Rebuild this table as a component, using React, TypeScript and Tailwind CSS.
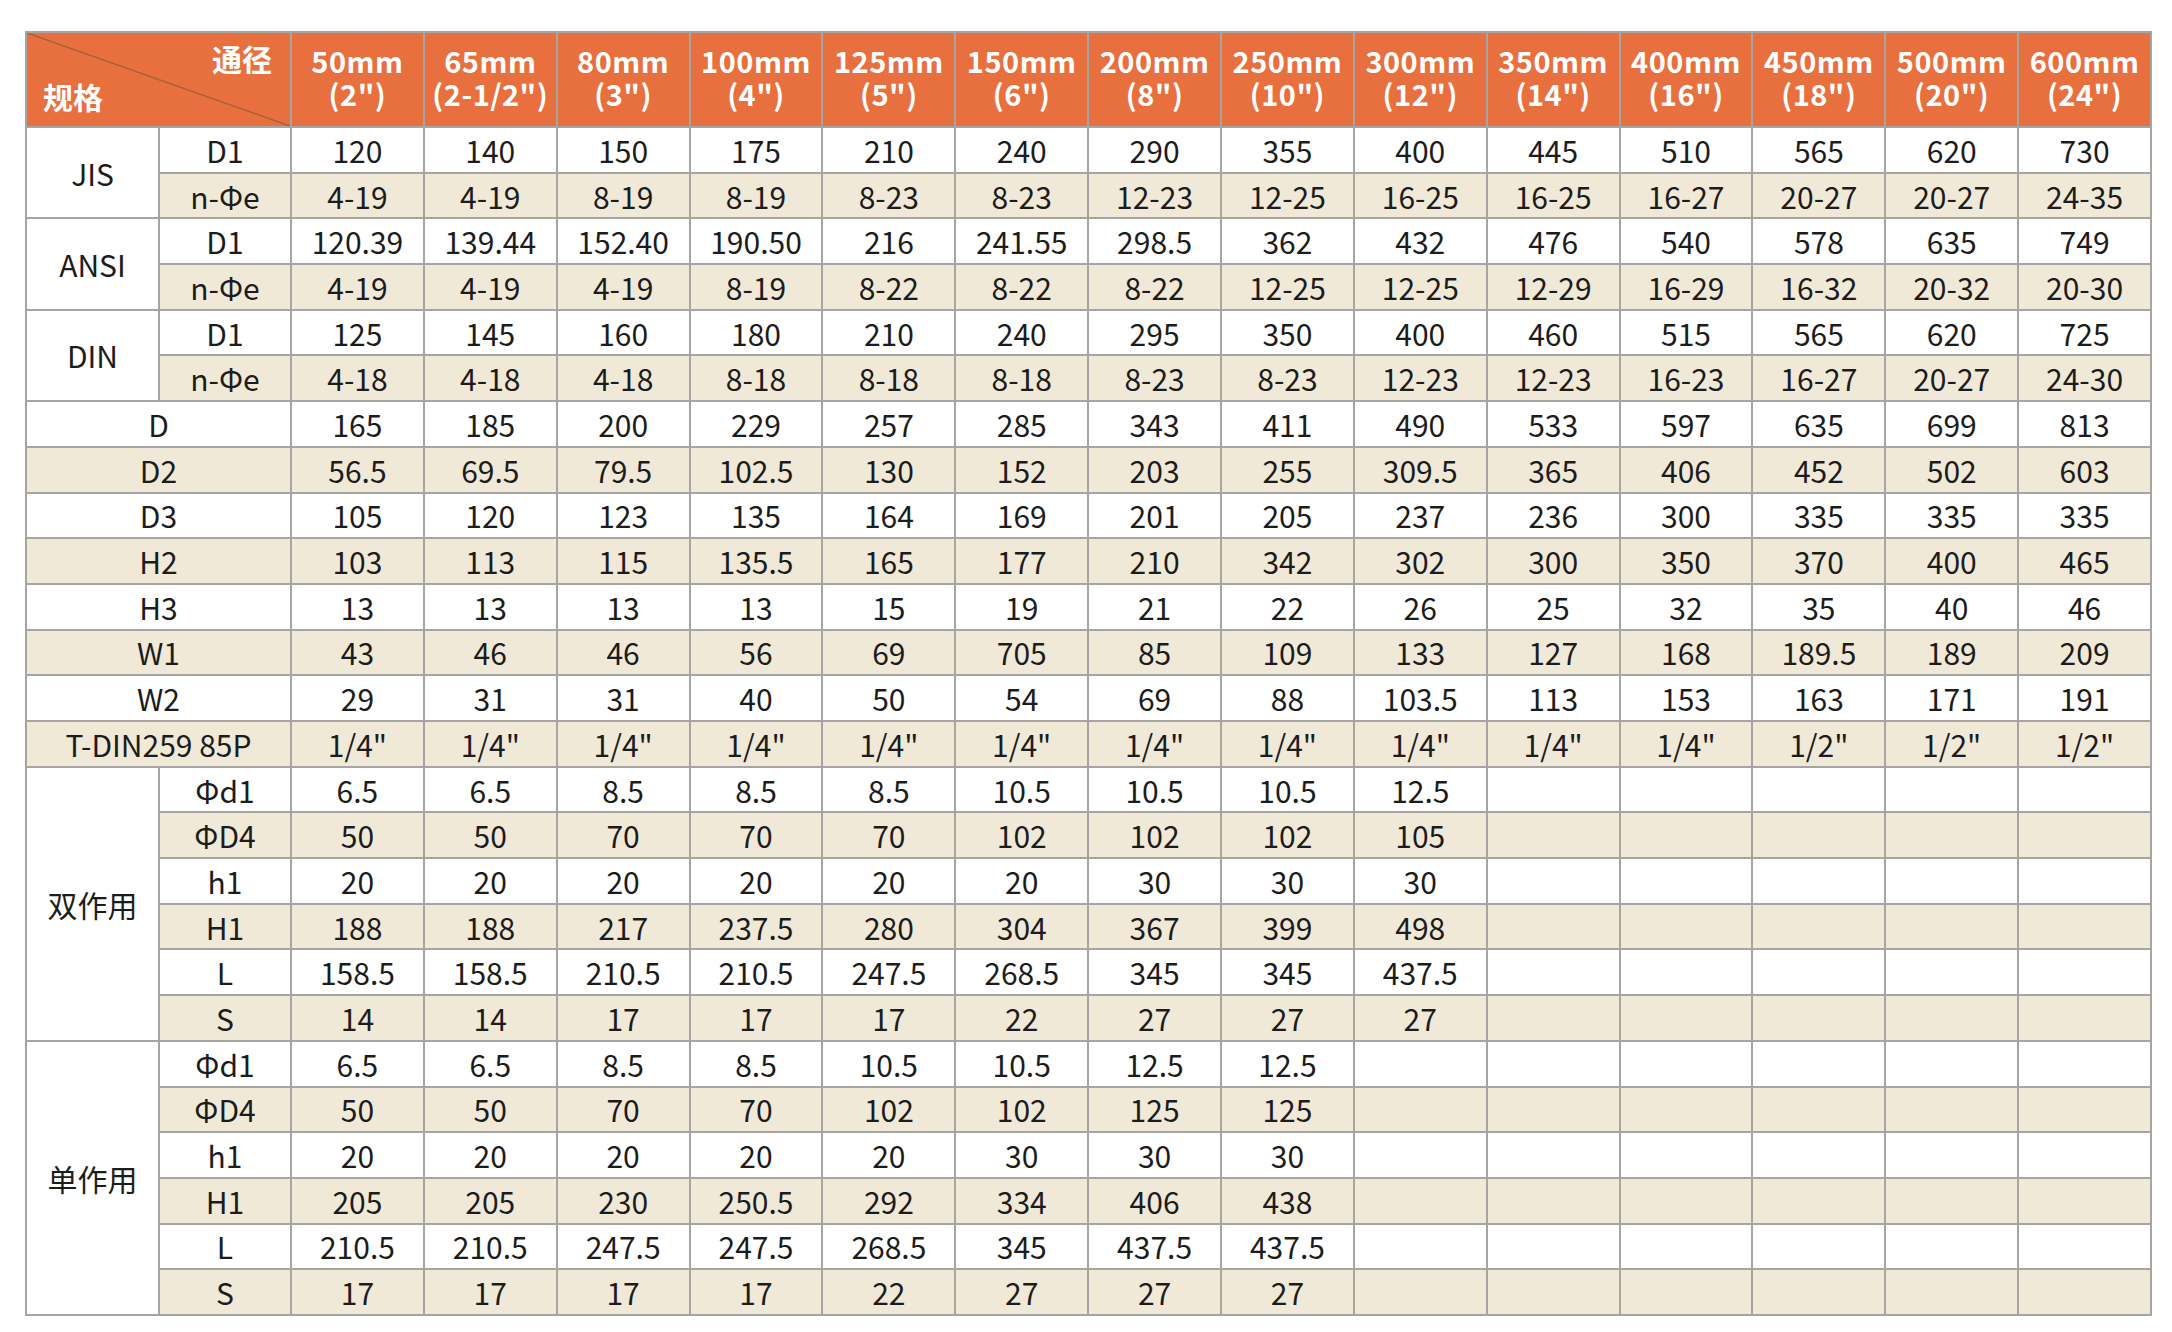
import React from 'react'

const sizes = [
  ['50mm', '(2")'],
  ['65mm', '(2-1/2")'],
  ['80mm', '(3")'],
  ['100mm', '(4")'],
  ['125mm', '(5")'],
  ['150mm', '(6")'],
  ['200mm', '(8")'],
  ['250mm', '(10")'],
  ['300mm', '(12")'],
  ['350mm', '(14")'],
  ['400mm', '(16")'],
  ['450mm', '(18")'],
  ['500mm', '(20")'],
  ['600mm', '(24")'],
]

type Group = { name?: string; rows: { label: string; values: string[] }[] }

const v = (s: string) => s.split(' ')

const groups: Group[] = [
  {
    name: 'JIS',
    rows: [
      { label: 'D1', values: v('120 140 150 175 210 240 290 355 400 445 510 565 620 730') },
      { label: 'n-Φe', values: v('4-19 4-19 8-19 8-19 8-23 8-23 12-23 12-25 16-25 16-25 16-27 20-27 20-27 24-35') },
    ],
  },
  {
    name: 'ANSI',
    rows: [
      { label: 'D1', values: v('120.39 139.44 152.40 190.50 216 241.55 298.5 362 432 476 540 578 635 749') },
      { label: 'n-Φe', values: v('4-19 4-19 4-19 8-19 8-22 8-22 8-22 12-25 12-25 12-29 16-29 16-32 20-32 20-30') },
    ],
  },
  {
    name: 'DIN',
    rows: [
      { label: 'D1', values: v('125 145 160 180 210 240 295 350 400 460 515 565 620 725') },
      { label: 'n-Φe', values: v('4-18 4-18 4-18 8-18 8-18 8-18 8-23 8-23 12-23 12-23 16-23 16-27 20-27 24-30') },
    ],
  },
  {
    rows: [
      { label: 'D', values: v('165 185 200 229 257 285 343 411 490 533 597 635 699 813') },
      { label: 'D2', values: v('56.5 69.5 79.5 102.5 130 152 203 255 309.5 365 406 452 502 603') },
      { label: 'D3', values: v('105 120 123 135 164 169 201 205 237 236 300 335 335 335') },
      { label: 'H2', values: v('103 113 115 135.5 165 177 210 342 302 300 350 370 400 465') },
      { label: 'H3', values: v('13 13 13 13 15 19 21 22 26 25 32 35 40 46') },
      { label: 'W1', values: v('43 46 46 56 69 705 85 109 133 127 168 189.5 189 209') },
      { label: 'W2', values: v('29 31 31 40 50 54 69 88 103.5 113 153 163 171 191') },
      { label: 'T-DIN259 85P', values: v('1/4" 1/4" 1/4" 1/4" 1/4" 1/4" 1/4" 1/4" 1/4" 1/4" 1/4" 1/2" 1/2" 1/2"') },
    ],
  },
  {
    name: '双作用',
    rows: [
      { label: 'Φd1', values: v('6.5 6.5 8.5 8.5 8.5 10.5 10.5 10.5 12.5') },
      { label: 'ΦD4', values: v('50 50 70 70 70 102 102 102 105') },
      { label: 'h1', values: v('20 20 20 20 20 20 30 30 30') },
      { label: 'H1', values: v('188 188 217 237.5 280 304 367 399 498') },
      { label: 'L', values: v('158.5 158.5 210.5 210.5 247.5 268.5 345 345 437.5') },
      { label: 'S', values: v('14 14 17 17 17 22 27 27 27') },
    ],
  },
  {
    name: '单作用',
    rows: [
      { label: 'Φd1', values: v('6.5 6.5 8.5 8.5 10.5 10.5 12.5 12.5') },
      { label: 'ΦD4', values: v('50 50 70 70 102 102 125 125') },
      { label: 'h1', values: v('20 20 20 20 20 30 30 30') },
      { label: 'H1', values: v('205 205 230 250.5 292 334 406 438') },
      { label: 'L', values: v('210.5 210.5 247.5 247.5 268.5 345 437.5 437.5') },
      { label: 'S', values: v('17 17 17 17 22 27 27 27') },
    ],
  },
]

const cell = 'flex items-center justify-center leading-none'

export default function App() {
  let rowIndex = 0
  const body: React.ReactNode[] = []

  groups.forEach((g, gi) => {
    if (g.name) {
      const span = g.rows.length === 2 ? 'row-span-2' : 'row-span-6'
      body.push(
        <div key={`g${gi}`} className={`${cell} ${span} bg-white`}>
          {g.name}
        </div>,
      )
    }
    g.rows.forEach((r, ri) => {
      const bg = rowIndex % 2 === 0 ? 'bg-white' : 'bg-[#f1e9d8]'
      rowIndex++
      body.push(
        <div key={`l${gi}-${ri}`} className={`${cell} ${bg} ${g.name ? '' : 'col-span-2'}`}>
          {r.label}
        </div>,
      )
      for (let i = 0; i < 14; i++) {
        body.push(
          <div key={`c${gi}-${ri}-${i}`} className={`${cell} ${bg}`}>
            {r.values[i] ?? ''}
          </div>,
        )
      }
    })
  })

  return (
    <div className="min-h-screen bg-white pl-[25px] pt-[31px]">
      <div
        className="grid h-[1285px] w-[2127px] grid-cols-[131px_130px_repeat(14,1fr)] grid-rows-[93px_repeat(26,1fr)] gap-[2px] bg-[#a7a5a2] p-[2px] text-[30px] text-[#1c1c1c]"
        style={{ fontFamily: '"Noto Sans CJK SC", "Noto Sans", sans-serif' }}
      >
        {/* corner cell with diagonal */}
        <div className="relative col-span-2 flex flex-col justify-between bg-[#e8703f] pb-[13px] pl-[16px] pr-[18px] pt-[8px] font-bold text-white">
          <svg className="absolute inset-0 h-full w-full" viewBox="0 0 263 93" preserveAspectRatio="none">
            <line x1="0" y1="0" x2="263" y2="93" stroke="#a8603c" strokeWidth="1.6" />
          </svg>
          <span className="relative self-end leading-[34px]">通径</span>
          <span className="relative self-start leading-[34px]">规格</span>
        </div>
        {sizes.map(([a, b]) => (
          <div key={a} className="flex items-center justify-center bg-[#e8703f] pb-[6px] text-center text-[29px] font-bold leading-[33px] tracking-[0.5px] text-white">
            <p>
              {a}
              <br />
              {b}
            </p>
          </div>
        ))}
        {body}
      </div>
    </div>
  )
}
